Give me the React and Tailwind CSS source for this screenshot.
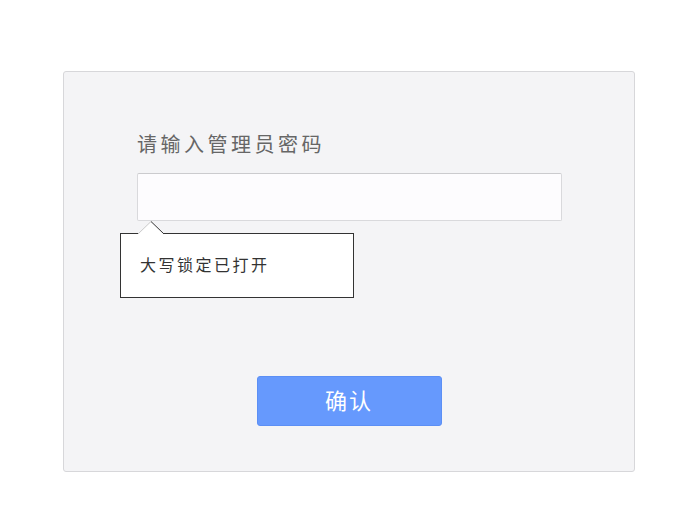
export default function App() {
  return (
    <div
      className="min-h-[527px] w-full bg-white pl-[63px] pt-[71px]"
      style={{ fontFamily: '"Liberation Sans", "Noto Sans CJK SC", sans-serif' }}
    >
      <div className="flex h-[401px] w-[572px] flex-col rounded-[3px] border border-[#d7d7da] bg-[#f4f4f6] pt-[60px]">
        <div className="ml-[73px] text-[20px] leading-[26px] tracking-[3.5px] text-[#666666]">
          请输入管理员密码
        </div>

        <div className="ml-[73px] mt-[15px] h-[48px] w-[425px] rounded-[2px] border border-[#d9d9dc] border-t-[#cbcbce] bg-[#fdfcfe]" />

        <div className="relative ml-[56px] mt-[12px] flex h-[65px] w-[234px] items-center border border-[#333333] bg-white pl-[19px] text-[16px] tracking-[2.5px] text-[#333333]">
          大写锁定已打开
          <svg
            className="absolute left-[17px] top-[-13px]"
            width="26"
            height="14"
            viewBox="0 0 26 14"
          >
            <polygon points="0,13 13,0.5 26,13" fill="#ffffff" />
            <line x1="0" y1="13" x2="13" y2="0.5" stroke="#c8c8c8" strokeWidth="1" />
            <line x1="13" y1="0.5" x2="26" y2="13" stroke="#333333" strokeWidth="1" />
          </svg>
        </div>

        <button className="mt-[78px] flex h-[50px] w-[185px] items-center justify-center self-center rounded-[3px] border border-[#5c8ff5] bg-[#6699fd] text-[22px] tracking-[2px] text-white">
          确认
        </button>
      </div>
    </div>
  );
}
